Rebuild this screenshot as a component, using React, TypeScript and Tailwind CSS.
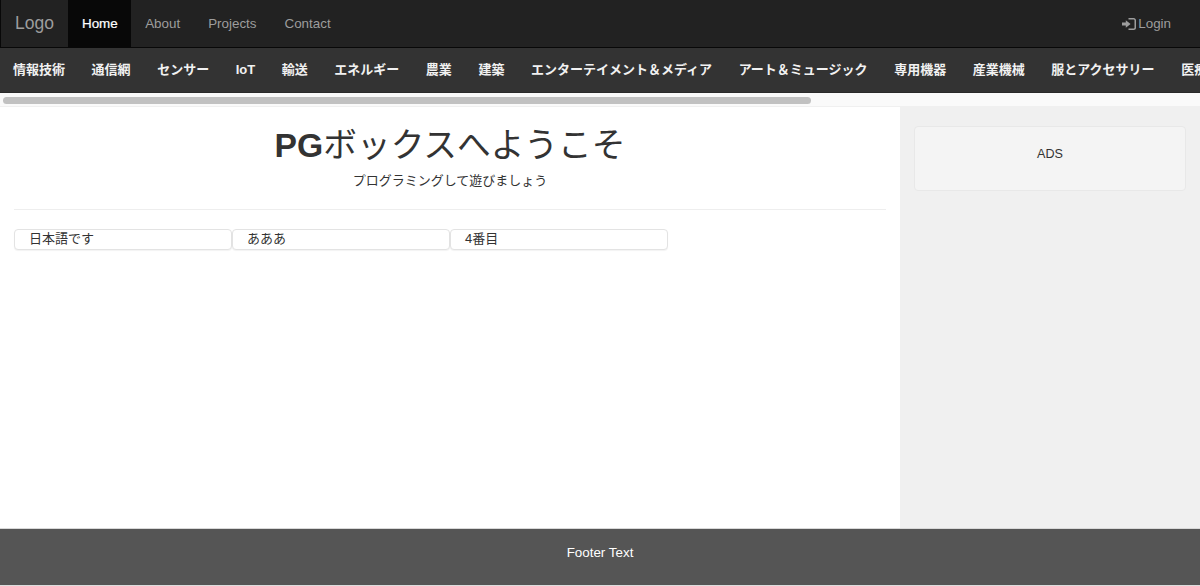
import React from 'react';

const navLinks = ['About', 'Projects', 'Contact'];

const categories = [
  '情報技術',
  '通信網',
  'センサー',
  'IoT',
  '輸送',
  'エネルギー',
  '農業',
  '建築',
  'エンターテイメント＆メディア',
  'アート＆ミュージック',
  '専用機器',
  '産業機械',
  '服とアクセサリー',
  '医療機器',
];

const cards = ['日本語です', 'あああ', '4番目'];

const LoginIcon = () => (
  <svg viewBox="0 0 14 12" className="h-3 w-[14px] shrink-0" fill="#9d9d9d">
    <path d="M0 4.6h3.8V2.2L8.6 6 3.8 9.8V7.4H0z" />
    <path d="M6.5 0h5.2C13 0 14 1 14 2.3v7.4C14 11 13 12 11.7 12H6.5v-1.5h5c.6 0 1-.4 1-1V2.5c0-.6-.4-1-1-1h-5z" />
  </svg>
);

const App = () => {
  return (
    <div className="flex h-[586px] w-[1200px] flex-col overflow-hidden bg-white font-['Liberation_Sans','Noto_Sans_CJK_JP',sans-serif] text-[13.4px] text-[#333]">
      <nav className="flex h-12 shrink-0 items-stretch justify-between border-b border-l border-[#080808] bg-[#222]">
        <div className="flex items-stretch">
          <a className="flex w-[67px] items-center pl-[14px] text-[17.5px] text-[#9d9d9d]">Logo</a>
          <a className="flex items-center bg-[#080808] pt-px pr-[13.4px] pl-[14px] text-white [-webkit-text-stroke:0.2px_white]">Home</a>
          {navLinks.map((link) => (
            <a key={link} className="flex items-center px-[14px] pt-px text-[#9d9d9d]">
              {link}
            </a>
          ))}
        </div>
        <a className="flex items-center gap-[2px] pt-px pr-[29px] text-[#9d9d9d]">
          <span className="-ml-[2px]"><LoginIcon /></span>
          Login
        </a>
      </nav>

      <div className="flex h-[45px] shrink-0 items-center overflow-hidden border-b border-[#2a2a2a] bg-[#333] pl-[13px]">
        {categories.map((cat) => (
          <a key={cat} className="mr-[26.55px] shrink-0 text-[13px] font-bold whitespace-nowrap text-[#f1f1f1]">
            {cat}
          </a>
        ))}
      </div>

      <div className="h-[14px] shrink-0 border-b border-[#f0f0f0] bg-[#fafafa] pt-1 pl-[3px]">
        <div className="h-[7px] w-[808px] rounded-full bg-[#c1c1c1]" />
      </div>

      <div className="flex min-h-0 flex-1">
        <main className="w-[900px] px-[14px] pt-4">
          <div className="border-b border-[#eee] pb-[18px] text-center">
            <h1 className="text-[33.7px] leading-[44px] font-normal">
              <b className="font-bold">PG</b>ボックスへようこそ
            </h1>
            <p className="mt-1 text-[13px] leading-5">プログラミングして遊びましょう</p>
          </div>
          <div className="mt-[19px] flex">
            {cards.map((card) => (
              <div
                key={card}
                className="h-[21px] w-[218px] rounded-[4px] border border-[#e3e3e3] bg-white pl-[14px] text-[13px] leading-[17px] shadow-[0_1px_1px_rgba(0,0,0,0.05)]"
              >
                {card}
              </div>
            ))}
          </div>
        </main>
        <aside className="flex-1 bg-[#f0f0f0] px-[14px] pt-[19px]">
          <div className="h-[65px] rounded-[4px] border border-[#e8e8e8] bg-[#f4f4f4] pt-[17px] text-center text-[12.6px] leading-[21px]">
            ADS
          </div>
        </aside>
      </div>

      <footer className="flex h-[58px] shrink-0 items-center justify-center border-t border-b border-t-[#d8d8d8] border-b-[#ddd] bg-[#555] pb-[8px] text-[13.4px] text-white">
        Footer Text
      </footer>
    </div>
  );
};

export default App;
